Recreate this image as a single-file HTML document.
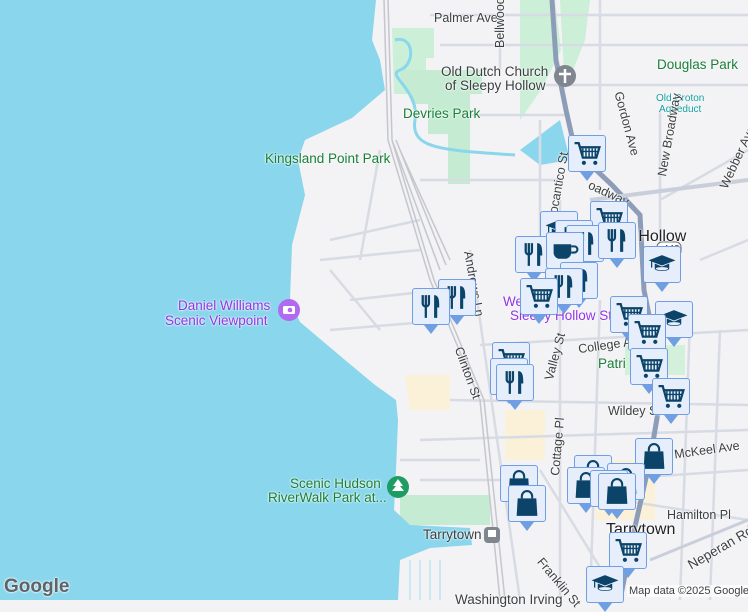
<!DOCTYPE html>
<html><head><meta charset="utf-8"><style>
body{margin:0;width:748px;height:600px;overflow:hidden;background:#f3f2f4;font-family:"Liberation Sans",sans-serif;position:relative}
svg.map{position:absolute;left:0;top:0}
.m{position:absolute;width:38px;height:37px;background:#e6eefc;border:1.5px solid #6f9fe2;border-radius:3px;box-sizing:border-box}
.m:after{content:"";position:absolute;left:11px;bottom:-10px;border-left:7px solid transparent;border-right:7px solid transparent;border-top:9px solid #6f9fe2}
.m svg{position:absolute;left:3px;top:3px;width:30px;height:29px}
.l{position:absolute;font-size:12.5px;color:#3c4043;white-space:nowrap;text-shadow:0 0 2px #fff,0 0 2px #fff}
.g{color:#188038;font-size:13.5px}
.p{color:#9334e6;font-size:13.5px}
</style></head><body>
<svg class="map" width="748" height="600" viewBox="0 0 748 600">
<defs>
<symbol id="cart" viewBox="0 0 28 28"><path d="M2 4h4l4 14h13l3-10H8" fill="none" stroke="#0b4468" stroke-width="2.2"/><path d="M10 9v8M13 9v8M16 9v8M19 9v8M22 9v8M9 12h15" stroke="#0b4468" stroke-width="1.4"/><circle cx="11" cy="23" r="2" fill="#0b4468"/><circle cx="22" cy="23" r="2" fill="#0b4468"/></symbol>
<symbol id="fork" viewBox="0 0 28 28"><path d="M6 3v8a3 3 0 0 0 6 0V3M9 3v22" fill="none" stroke="#0b4468" stroke-width="2.2"/><path d="M17 3c5 0 5 6 5 12h-2v10h-3z" fill="#0b4468"/></symbol>
<symbol id="bag" viewBox="0 0 28 28"><path d="M9 9V7a5 5 0 0 1 10 0v2" fill="none" stroke="#0b4468" stroke-width="2"/><path d="M5 9h18l1 17H4z" fill="#0b4468"/></symbol>
<symbol id="school" viewBox="0 0 28 28"><path d="M1 10l13-5 13 5-13 5z" fill="#0b4468"/><path d="M7 13v5c0 3 14 3 14 0v-5l-7 3z" fill="#0b4468"/><ellipse cx="14" cy="18" rx="6" ry="1.5" fill="#e6eefc"/><path d="M4 11v6" stroke="#0b4468" stroke-width="1.2"/></symbol>
<symbol id="cup" viewBox="0 0 28 28"><path d="M3 8h17v8a6 6 0 0 1-6 6H9a6 6 0 0 1-6-6z" fill="#0b4468"/><path d="M20 10h3a3 3 0 0 1 0 6h-3" fill="none" stroke="#0b4468" stroke-width="2"/></symbol>
</defs>
<path d="M392 28h42v30h-8v36h-32z" fill="#ccefd7"/>
<path d="M398 70h86v6h-2v18h-12v90h-22v-50h-20v-30h-16z" fill="#c5ecd2"/>
<path d="M520 0h35l6 50-20 40-21 30z" fill="#ccefd7"/>
<path d="M560 0h30l-5 40-20 50z" fill="#ccefd7"/>
<path d="M625 345h60v30h-60z" fill="#d2f0da"/>
<path d="M400 495h90v30h-70v25h-20z" fill="#c5ecd2"/>
<path d="M405 375h45v35h-40z" fill="#fbf0d8"/>
<path d="M505 410h40v50h-40z" fill="#fbf0d8"/>
<path d="M595 460h60v60h-60z" fill="#fbf0d8"/>
<path d="M0 0H376L372 40L380 60L385 90L352 118L305 140L298 160L305 195L292 245L290 300L300 322L345 360L375 385L396 400L398 420L396 470L394 510L410 525L470 528L472 545L430 548L400 560L398 600H0Z" fill="#8ad6ec"/>
<path d="M520 150l40-30 10 40-30 5z" fill="#8ad6ec"/>
<path d="M395 40c20-5 20 25 5 30s20 20 15 50 30 30 100 35" fill="none" stroke="#8ad6ec" stroke-width="3"/>
<path d="M410 560v40M420 560v40M430 560v40M440 560v40" stroke="#c9e8f2" stroke-width="2"/>
<g stroke="#d7dbe3" stroke-width="2.5" fill="none">
<path d="M430 15H748M440 45H748M540 85H748M460 115H570M420 180H560M540 120L540 250M500 0V70M600 0V130M660 110V260M330 240L420 220M320 260L420 250M350 300L440 290M330 330L450 320M480 345L748 330M450 400L748 405M420 440L748 430M600 480L748 470M620 500L748 520M540 470L620 600M660 200L748 150M700 260L748 240M470 250L520 600M560 200L560 600M600 300L590 600M690 320L680 600M720 330L710 600M400 460H480M420 480H500M380 150L360 260M330 270L380 330"/>
</g>
<g stroke="#c4c7cd" stroke-width="1.5" fill="none">
<path d="M384 0L388 140L430 280L480 400L500 600"/><path d="M388 0L392 140L434 280L484 400L505 600"/><path d="M392 140L440 270M396 140L446 265M400 150L450 260"/>
</g>
<path d="M552 0L556 60L566 110L575 150L612 185L640 215L644 290L652 330L660 400L650 460L632 540L620 600" fill="none" stroke="#8d9db8" stroke-width="5"/>
<path d="M590 200L748 180" stroke="#c9cfda" stroke-width="4"/>
<path d="M650 560L748 520" stroke="#c9cfda" stroke-width="3"/>
<circle cx="565" cy="76" r="11" fill="#7f8690"/><path d="M565 69v14M559 74h12" stroke="#fff" stroke-width="2.5"/>
<circle cx="289" cy="310" r="11" fill="#b069f0"/><rect x="283" y="306" width="12" height="8" rx="1.5" fill="#fff"/><circle cx="290" cy="310" r="2.3" fill="#b069f0"/>
<circle cx="398" cy="487" r="11" fill="#1f9b64"/><path d="M398 479l-5 7h3l-4 5h12l-4-5h3z" fill="#fff"/>
<rect x="484" y="527" width="16" height="16" rx="4" fill="#7f8690"/><rect x="488" y="530" width="8" height="7" fill="#fff"/>
<rect x="657" y="242" width="24" height="14" rx="5" fill="#fff" stroke="#666"/>
</svg>
<div class="l" style="left:434px;top:11px">Palmer Ave</div>
<div class="l" style="left:493px;top:48px;transform:rotate(-90deg);transform-origin:left top">Bellwood</div>
<div class="l" style="left:441px;top:64px;font-size:13.5px">Old Dutch Church</div>
<div class="l" style="left:445px;top:78px;font-size:13.5px">of Sleepy Hollow</div>
<div class="l g" style="left:657px;top:57px">Douglas Park</div>
<div class="l" style="left:656px;top:93px;color:#11a0a0;font-size:10px;line-height:11px;text-align:center">Old Croton<br>Aqueduct</div>
<div class="l g" style="left:403px;top:106px">Devries Park</div>
<div class="l g" style="left:265px;top:151px">Kingsland Point Park</div>
<div class="l" style="left:617px;top:228px;font-size:16px;color:#202124">by Hollow</div>
<div class="l" style="left:663px;top:244px;font-size:10px">448</div>
<div class="l p" style="left:178px;top:298px">Daniel Williams</div>
<div class="l p" style="left:165px;top:313px">Scenic Viewpoint</div>
<div class="l p" style="left:503px;top:294px">We</div>
<div class="l p" style="left:510px;top:308px">Sleepy Hollow St</div>
<div class="l" style="left:578px;top:338px;transform:rotate(-8deg)">College Av</div>
<div class="l g" style="left:598px;top:356px">Patri&nbsp;&nbsp;&nbsp;&nbsp;&nbsp;&nbsp;ark</div>
<div class="l" style="left:608px;top:404px">Wildey St</div>
<div class="l" style="left:674px;top:443px;transform:rotate(-8deg)">McKeel Ave</div>
<div class="l" style="left:667px;top:508px">Hamilton Pl</div>
<div class="l" style="left:606px;top:521px;font-size:16px;color:#202124">Tarrytown</div>
<div class="l" style="left:423px;top:527px;font-size:13.5px">Tarrytown</div>
<div class="l g" style="left:290px;top:476px">Scenic Hudson</div>
<div class="l g" style="left:268px;top:490px">RiverWalk Park at...</div>
<div class="l" style="left:684px;top:540px;transform:rotate(-30deg);font-size:13.5px">Neperan Rd</div>
<div class="l" style="left:455px;top:592px;font-size:13.5px">Washington Irving</div>
<div class="l" style="left:627px;top:585px;font-size:11px;background:rgba(255,255,255,.7);padding:0 2px">Map data ©2025 Google</div>
<div class="l" style="left:4px;top:576px;font-size:19px;color:#5f6368;font-weight:bold">Google</div>
<div class="l" style="left:475px;top:250px;transform:rotate(80deg);transform-origin:left top">Andrews Ln</div>
<div class="l" style="left:465px;top:345px;transform:rotate(70deg);transform-origin:left top">Clinton St</div>
<div class="l" style="left:542px;top:378px;transform:rotate(-75deg);transform-origin:left top">Valley St</div>
<div class="l" style="left:625px;top:90px;transform:rotate(75deg);transform-origin:left top">Gordon Ave</div>
<div class="l" style="left:655px;top:175px;transform:rotate(-80deg);transform-origin:left top">New Broadway</div>
<div class="l" style="left:717px;top:185px;transform:rotate(-65deg);transform-origin:left top">Webber Ave</div>
<div class="l" style="left:592px;top:178px;transform:rotate(25deg);transform-origin:left top">oadway</div>
<div class="l" style="left:545px;top:220px;transform:rotate(-80deg);transform-origin:left top">Pocantico St</div>
<div class="l" style="left:548px;top:475px;transform:rotate(-85deg);transform-origin:left top">Cottage Pl</div>
<div class="l" style="left:545px;top:555px;transform:rotate(50deg);transform-origin:left top">Franklin St</div>
<div class="m" style="left:568px;top:135px"><svg><use href="#cart"/></svg></div>
<div class="m" style="left:540px;top:211px"><svg><use href="#school"/></svg></div>
<div class="m" style="left:590px;top:201px"><svg><use href="#cart"/></svg></div>
<div class="m" style="left:555px;top:220px"><svg><use href="#fork"/></svg></div>
<div class="m" style="left:566px;top:225px"><svg><use href="#fork"/></svg></div>
<div class="m" style="left:598px;top:222px"><svg><use href="#fork"/></svg></div>
<div class="m" style="left:515px;top:236px"><svg><use href="#fork"/></svg></div>
<div class="m" style="left:546px;top:232px"><svg><use href="#cup"/></svg></div>
<div class="m" style="left:560px;top:262px"><svg><use href="#fork"/></svg></div>
<div class="m" style="left:545px;top:268px"><svg><use href="#fork"/></svg></div>
<div class="m" style="left:520px;top:278px"><svg><use href="#cart"/></svg></div>
<div class="m" style="left:643px;top:246px"><svg><use href="#school"/></svg></div>
<div class="m" style="left:438px;top:279px"><svg><use href="#fork"/></svg></div>
<div class="m" style="left:412px;top:288px"><svg><use href="#fork"/></svg></div>
<div class="m" style="left:655px;top:301px"><svg><use href="#school"/></svg></div>
<div class="m" style="left:610px;top:296px"><svg><use href="#cart"/></svg></div>
<div class="m" style="left:628px;top:314px"><svg><use href="#cart"/></svg></div>
<div class="m" style="left:630px;top:348px"><svg><use href="#cart"/></svg></div>
<div class="m" style="left:652px;top:378px"><svg><use href="#cart"/></svg></div>
<div class="m" style="left:492px;top:342px"><svg><use href="#cart"/></svg></div>
<div class="m" style="left:490px;top:358px"><svg><use href="#fork"/></svg></div>
<div class="m" style="left:496px;top:364px"><svg><use href="#fork"/></svg></div>
<div class="m" style="left:635px;top:438px"><svg><use href="#bag"/></svg></div>
<div class="m" style="left:500px;top:465px"><svg><use href="#bag"/></svg></div>
<div class="m" style="left:508px;top:485px"><svg><use href="#bag"/></svg></div>
<div class="m" style="left:574px;top:455px"><svg><use href="#bag"/></svg></div>
<div class="m" style="left:607px;top:463px"><svg><use href="#bag"/></svg></div>
<div class="m" style="left:567px;top:467px"><svg><use href="#bag"/></svg></div>
<div class="m" style="left:590px;top:470px"><svg><use href="#bag"/></svg></div>
<div class="m" style="left:598px;top:473px"><svg><use href="#bag"/></svg></div>
<div class="m" style="left:609px;top:532px"><svg><use href="#cart"/></svg></div>
<div class="m" style="left:586px;top:566px"><svg><use href="#school"/></svg></div>
</body></html>
